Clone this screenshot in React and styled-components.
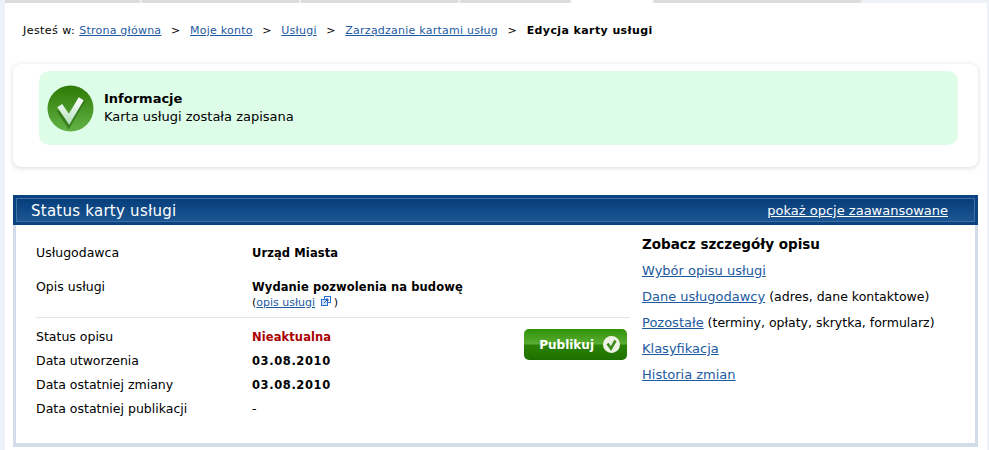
import React from "react";
import styled, { createGlobalStyle } from "styled-components";

const Global = createGlobalStyle`
  html, body { margin: 0; padding: 0; background: #eef1f7; }
  body { font-family: "DejaVu Sans", Verdana, sans-serif; font-size: 11px; color: #000; overflow: hidden; }
  a { color: #1d5a9f; text-decoration: underline; }
`;

const Page = styled.div`
  width: 989px;
  height: 450px;
  overflow: hidden;
  box-sizing: border-box;
  padding-left: 5px;
`;
const Tabs = styled.div`
  display: flex;
  height: 3px;
  gap: 2px;
`;
const Tab = styled.div`
  width: ${(p) => p.$w}px;
  background: ${(p) => (p.$active ? "#fff" : "#dcdcdc")};
`;
const Main = styled.div`
  width: 982px;
  height: 447px;
  background: #fff;
  box-sizing: border-box;
  padding: 0 0 0 8px;
`;
const Crumbs = styled.div`
  display: flex;
  align-items: center;
  height: 54px;
  padding-left: 10px;
  white-space: nowrap;
  letter-spacing: 0.24px;
`;
const Lead = styled.span`
  letter-spacing: 0.45px;
`;
const Sep = styled.span`
  margin: 0 9.6px;
`;
const Current = styled.strong`
  font-weight: 700;
  letter-spacing: 0.4px;
`;
const NoticeCard = styled.div`
  width: 965px;
  height: 103px;
  margin-top: 7px;
  box-sizing: border-box;
  padding: 7px 20px 0 26px;
  border-radius: 8px;
  background: #fff;
  box-shadow: 0 1px 5px rgba(120, 130, 150, 0.3);
`;
const Notice = styled.div`
  display: flex;
  align-items: center;
  gap: 10px;
  height: 74px;
  box-sizing: border-box;
  padding-left: 8px;
  border-radius: 10px;
  background: #defde9;
`;
const NoticeBody = styled.div`
  padding-top: 0;
`;
const NoticeTitle = styled.div`
  font-size: 13px;
  font-weight: 700;
  line-height: 17px;
`;
const NoticeText = styled.div`
  font-size: 13px;
  line-height: 19px;
`;
const Panel = styled.section`
  width: 965px;
  height: 252px;
  margin-top: 28px;
  box-sizing: border-box;
  background: #d3dce9;
  padding: 0 3px 4px 3px;
  display: flex;
  flex-direction: column;
`;
const PanelHead = styled.header`
  display: flex;
  align-items: center;
  justify-content: space-between;
  height: 30px;
  margin: 0 -3px;
  padding: 1px 30px 0 18px;
  box-sizing: border-box;
  background: linear-gradient(#023a75, #1f5a98);
  box-shadow: inset 0 0 0 3px #0b4380, inset 0 0 0 4px #3e6fa5;
  color: #fff;
`;
const PanelTitle = styled.h2`
  margin: 0;
  font-size: 15px;
  font-weight: 400;
  letter-spacing: 0.25px;
`;
const HeadLink = styled.a`
  color: #fff;
  font-size: 13px;
`;
const PanelBody = styled.div`
  flex: 1;
  display: flex;
  background: #fff;
  padding-left: 20px;
`;
const Left = styled.div`
  width: 594px;
  padding-top: 19px;
`;
const Row = styled.div`
  display: grid;
  grid-template-columns: 216px 1fr;
  min-height: ${(p) => p.$h || 24}px;
  line-height: 18px;
  font-size: 12.5px;
`;
const Value = styled.div`
  font-size: 11.5px;
  font-weight: 700;
  letter-spacing: ${(p) => p.$ls || 0.1}px;
  color: ${(p) => p.$color || "#000"};
`;
const Sub = styled.div`
  font-size: 11px;
  font-weight: 400;
  letter-spacing: 0;
  line-height: 11px;
`;
const Divider = styled.hr`
  margin: 0 0 10px;
  border: 0;
  border-top: 1px solid #e4e4e4;
`;
const StatusArea = styled.div`
  position: relative;
`;
const PublishButton = styled.button`
  position: absolute;
  top: 1px;
  right: 3px;
  width: 103px;
  height: 31px;
  display: flex;
  align-items: center;
  justify-content: flex-end;
  gap: 9px;
  padding: 0 7px 0 0;
  border: 0;
  border-radius: 5px;
  color: #fff;
  font: 700 12px "DejaVu Sans", Verdana, sans-serif;
  background: linear-gradient(#2f9208 0, #5aad33 48%, #2a8204 52%, #1e7000 100%);
`;
const Right = styled.aside`
  flex: 1;
  padding: 10px 0 0 12px;
`;
const SideTitle = styled.h3`
  margin: 0 0 9px;
  font-size: 13.5px;
  font-weight: 700;
  line-height: 18px;
`;
const SideRow = styled.div`
  height: 26px;
  line-height: 18px;
  font-size: 12.5px;
  white-space: nowrap;
`;
const SideLink = styled.a`
  font-size: 13px;
`;

function BigCheck() {
  return (
    <svg width="47" height="47" viewBox="0 0 48 48">
      <defs>
        <linearGradient id="g" x1="0" y1="0" x2="0" y2="1">
          <stop offset="0" stopColor="#2e7a05" />
          <stop offset="1" stopColor="#62b246" />
        </linearGradient>
        <linearGradient id="c" x1="0" y1="0" x2="0" y2="1">
          <stop offset="0" stopColor="#fff" />
          <stop offset="1" stopColor="#bfe5c8" />
        </linearGradient>
      </defs>
      <circle cx="24" cy="24" r="23.5" fill="url(#g)" />
      <path d="M13 24 L22 38 L36 13" transform="translate(0 1)" fill="none" stroke="#1c5a05" strokeOpacity=".5" strokeWidth="7" />
      <path d="M13 21 L22.5 35 L35 14" fill="none" stroke="url(#c)" strokeWidth="6" />
    </svg>
  );
}
function SmallCheck() {
  return (
    <svg width="17" height="17" viewBox="0 0 17 17">
      <circle cx="8.5" cy="8.5" r="8.5" fill="#eef3e6" />
      <path d="M4.5 7.5 L8 12.5 L12.5 4.5" fill="none" stroke="#3e8a1c" strokeWidth="2.6" />
    </svg>
  );
}
function ExtIcon() {
  return (
    <svg width="10" height="10" viewBox="0 0 10 10" style={{ margin: "0 3px 0 2px" }}>
      <rect x="3.5" y="0.5" width="6" height="6" fill="#fff" stroke="#2a6fd0" />
      <rect x="0.5" y="3.5" width="6" height="6" fill="#cfe2fb" stroke="#2a6fd0" />
      <path d="M3 7 L7 3 M5 3 H7 V5" stroke="#1d55b0" fill="none" />
    </svg>
  );
}

export default function App() {
  return (
    <Page>
      <Global />
      <Tabs>
        <Tab $w={135} />
        <Tab $w={157} />
        <Tab $w={157} />
        <Tab $w={110} />
        <Tab $w={80} $active />
        <Tab $w={207} />
      </Tabs>
      <Main>
        <Crumbs>
          <Lead>Jesteś w:&nbsp;</Lead>
          <a href="#a">Strona główna</a>
          <Sep>&gt;</Sep>
          <a href="#a">Moje konto</a>
          <Sep>&gt;</Sep>
          <a href="#a">Usługi</a>
          <Sep>&gt;</Sep>
          <a href="#a">Zarządzanie kartami usług</a>
          <Sep>&gt;</Sep>
          <Current>Edycja karty usługi</Current>
        </Crumbs>
        <NoticeCard>
          <Notice>
            <BigCheck />
            <NoticeBody>
              <NoticeTitle>Informacje</NoticeTitle>
              <NoticeText>Karta usługi została zapisana</NoticeText>
            </NoticeBody>
          </Notice>
        </NoticeCard>
        <Panel>
          <PanelHead>
            <PanelTitle>Status karty usługi</PanelTitle>
            <HeadLink href="#a">pokaż opcje zaawansowane</HeadLink>
          </PanelHead>
          <PanelBody>
            <Left>
              <Row $h={34}>
                <span>Usługodawca</span>
                <Value>Urząd Miasta</Value>
              </Row>
              <Row $h={39}>
                <span>Opis usługi</span>
                <Value>
                  Wydanie pozwolenia na budowę
                  <Sub>
                    (<a href="#a">opis usługi</a> <ExtIcon />)
                  </Sub>
                </Value>
              </Row>
              <Divider />
              <StatusArea>
                <Row>
                  <span>Status opisu</span>
                  <Value $color="#a80000">Nieaktualna</Value>
                </Row>
                <Row>
                  <span>Data utworzenia</span>
                  <Value $ls={0.6}>03.08.2010</Value>
                </Row>
                <Row>
                  <span>Data ostatniej zmiany</span>
                  <Value $ls={0.6}>03.08.2010</Value>
                </Row>
                <Row>
                  <span>Data ostatniej publikacji</span>
                  <span>-</span>
                </Row>
                <PublishButton>
                  Publikuj <SmallCheck />
                </PublishButton>
              </StatusArea>
            </Left>
            <Right>
              <SideTitle>Zobacz szczegóły opisu</SideTitle>
              <SideRow><SideLink href="#a">Wybór opisu usługi</SideLink></SideRow>
              <SideRow><SideLink href="#a">Dane usługodawcy</SideLink> (adres, dane kontaktowe)</SideRow>
              <SideRow><SideLink href="#a">Pozostałe</SideLink> (terminy, opłaty, skrytka, formularz)</SideRow>
              <SideRow><SideLink href="#a">Klasyfikacja</SideLink></SideRow>
              <SideRow><SideLink href="#a">Historia zmian</SideLink></SideRow>
            </Right>
          </PanelBody>
        </Panel>
      </Main>
    </Page>
  );
}
